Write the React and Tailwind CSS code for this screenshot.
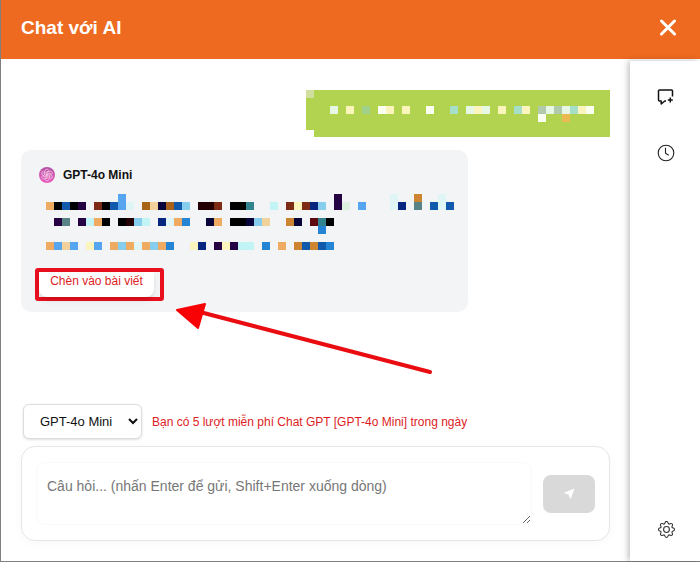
import { useState } from "react";

const CELL = 8;

const PALETTE = {
  K: "#000000",
  o: "#efab61",
  O: "#cd8532",
  b: "#1059ab",
  B: "#2684d6",
  s: "#58a5ef",
  S: "#86cdee",
  n: "#06267f",
  N: "#07053c",
  v: "#250344",
  r: "#7d2b14",
  R: "#230004",
  M: "#5e0a10",
  w: "#a8621a",
  c: "#f2d29b",
  y: "#fbf4bc",
  p: "#e0f6f6",
  P: "#c2f3f5",
  g: "#5a8385",
  G: "#33838f",
  e: "#def3df",
  L: "#d0dfa0",
  W: "#fafff0",
  m: "#e6f8e4",
  t: "#a6dfc7",
  T: "#b1cbaa",
  d: "#9fcf88",
  f: "#ebbb52",
};

const userMask = [
  "L                                     ",
  "                                      ",
  "   m y d Wy y  W  t mym y ty TmTmtyW  ",
  "                             W  f     ",
];

const answerMask = [
  ".........s..........................v......p..O..p.",
  "oKbKv.rKbsp.wcNwbS.RRr.KKG..P.ryrnS.ve.s...pn.g.bpb",
  "...................................................",
  ".vg.vPoK.KRSP.npoB..No.KKNSc..ON.MGK...............",
  "..................................B................",
  "...................................................",
  "oscs.ys.oSopoSoB..yn.vyvPP.B.o.ObObB...............",
];

const MaskedText = ({ rows, label }) => {
  const width = rows[0].length * CELL;
  const height = rows.length * CELL;

  return (
    <svg
      role="img"
      aria-label={label}
      width={width}
      height={height}
      viewBox={`0 0 ${width} ${height}`}
      shapeRendering="crispEdges"
      className="block"
    >
      {rows.map((row, y) =>
        [...row].map((key, x) =>
          PALETTE[key] ? (
            <rect
              key={`${x}-${y}`}
              x={x * CELL}
              y={y * CELL}
              width={CELL}
              height={CELL}
              fill={PALETTE[key]}
            />
          ) : null
        )
      )}
    </svg>
  );
};

const BotLogo = () => (
  <svg width="16" height="16" viewBox="0 0 16 16" fill="none" aria-hidden="true">
    <defs>
      <linearGradient id="bot" x1="0" y1="0" x2="0" y2="1">
        <stop offset="0" stopColor="#b0529f" />
        <stop offset="1" stopColor="#ee5fc0" />
      </linearGradient>
    </defs>
    <circle cx="8" cy="8" r="8" fill="url(#bot)" />
    <g stroke="#f6c9ea" strokeWidth="0.8">
      {[0, 60, 120, 180, 240, 300].map((a) => (
        <path key={a} transform={`rotate(${a} 8 8)`} d="M5.8 6.8V4.4A2.2 2.2 0 0 1 9.5 2.9M7.2 8.5V5.2L9.8 3.8" />
      ))}
    </g>
  </svg>
);

const CloseIcon = () => (
  <svg width="18" height="18" viewBox="0 0 18 18" stroke="#fff" strokeWidth="3" strokeLinecap="round" aria-hidden="true">
    <path d="M2.500 2l13 13M15.500 2l-13 13" />
  </svg>
);

const NewChatIcon = () => (
  <svg width="18" height="18" viewBox="0 0 18 18" fill="none" stroke="#111" strokeWidth="1.5" strokeLinejoin="round" aria-hidden="true">
    <path d="M15.500 8.500V3a1 1 0 0 0-1-1h-12a1 1 0 0 0-1 1v9a1 1 0 0 0 1 1h1.700v3l3.600-3h1.200" />
    <path d="M13.300 9.500v5M10.800 12h5" />
  </svg>
);

const HistoryIcon = () => (
  <svg width="18" height="18" viewBox="0 0 18 18" fill="none" stroke="#222" strokeWidth="1.1" aria-hidden="true">
    <circle cx="9" cy="9" r="7.8" />
    <path d="M8.500 3.800v5.500l3.200 1.900" />
  </svg>
);

const GearIcon = () => (
  <svg width="17" height="17" viewBox="0 0 16 16" fill="#333" aria-hidden="true">
    <path d="M8 4.754a3.246 3.246 0 1 0 0 6.492 3.246 3.246 0 0 0 0-6.492M5.754 8a2.246 2.246 0 1 1 4.492 0 2.246 2.246 0 0 1-4.492 0" />
    <path d="M9.796 1.343c-.527-1.79-3.065-1.79-3.592 0l-.094.319a.873.873 0 0 1-1.255.52l-.292-.16c-1.64-.892-3.433.902-2.54 2.541l.159.292a.873.873 0 0 1-.52 1.255l-.319.094c-1.79.527-1.79 3.065 0 3.592l.319.094a.873.873 0 0 1 .52 1.255l-.16.292c-.892 1.64.901 3.434 2.541 2.54l.292-.159a.873.873 0 0 1 1.255.52l.094.319c.527 1.79 3.065 1.79 3.592 0l.094-.319a.873.873 0 0 1 1.255-.52l.292.16c1.64.893 3.434-.902 2.54-2.541l-.159-.292a.873.873 0 0 1 .52-1.255l.319-.094c1.79-.527 1.79-3.065 0-3.592l-.319-.094a.873.873 0 0 1-.52-1.255l.16-.292c.893-1.64-.902-3.433-2.541-2.54l-.292.159a.873.873 0 0 1-1.255-.52zm-2.633.283c.246-.835 1.428-.835 1.674 0l.094.319a1.873 1.873 0 0 0 2.693 1.115l.291-.16c.764-.415 1.6.42 1.184 1.185l-.159.292a1.873 1.873 0 0 0 1.116 2.692l.318.094c.835.246.835 1.428 0 1.674l-.319.094a1.873 1.873 0 0 0-1.115 2.693l.16.291c.415.764-.42 1.6-1.185 1.184l-.291-.159a1.873 1.873 0 0 0-2.693 1.116l-.094.318c-.246.835-1.428.835-1.674 0l-.094-.319a1.873 1.873 0 0 0-2.692-1.115l-.292.16c-.764.415-1.6-.42-1.184-1.185l.159-.291A1.873 1.873 0 0 0 1.945 8.93l-.319-.094c-.835-.246-.835-1.428 0-1.674l.319-.094A1.873 1.873 0 0 0 3.06 4.377l-.16-.292c-.415-.764.42-1.6 1.185-1.184l.292.159a1.873 1.873 0 0 0 2.692-1.115z" />
  </svg>
);

const SendIcon = () => (
  <svg width="12" height="12" viewBox="0 0 12 12" fill="#fff" aria-hidden="true">
    <path d="M11.500 .500L.500 5l5 1.500L7.500 11.500z" />
  </svg>
);

const Arrow = () => (
  <svg width="258" height="72" viewBox="0 0 258 72" className="pointer-events-none absolute left-[155px] top-[152px]" aria-hidden="true">
    <path d="M22 9.500L254 70" stroke="#e90d12" strokeWidth="4" strokeLinecap="round" />
    <path d="M1 8L29 2l-7 24z" fill="#f80205" stroke="#f80205" strokeWidth="2" strokeLinejoin="round" />
  </svg>
);

const UserMessage = () => (
  <div className="flex justify-end">
    <div className="h-[47px] bg-[#b2d34f] [clip-path:polygon(0_0,100%_0,100%_100%,8px_100%,8px_40px,0_40px)]">
      <MaskedText rows={userMask} label="Tin nhắn của bạn" />
    </div>
  </div>
);

const BotMessage = () => (
  <div className="relative mt-[13px] w-[447px] max-w-full rounded-[10px] bg-[#f3f4f6] pt-4 pb-[11px]">
    <div className="flex items-center gap-2 pl-[18px]">
      <BotLogo />
      <span className="text-[12px] leading-[18px] font-bold text-[#111]">GPT-4o Mini</span>
    </div>
    <div className="mt-[10px] overflow-hidden pl-[25px]">
      <MaskedText rows={answerMask} label="Câu trả lời" />
    </div>
    <div className="mt-[18px] ml-[14px] w-[129px] rounded-[3px] border-4 border-[#e8101f]">
      <button className="block h-[25px] w-[115px] rounded-b-lg bg-white pb-2 text-[12px] leading-4 text-[#dc1c24] shadow-md">
        Chèn vào bài viết
      </button>
    </div>
    <Arrow />
  </div>
);

const ChatForm = () => {
  const [model, setModel] = useState("GPT-4o Mini");
  const [question, setQuestion] = useState("");

  return (
    <form className="mt-auto" onSubmit={(e) => e.preventDefault()}>
      <div className="flex items-center gap-[10px] pl-[2px]">
        <select
          aria-label="Model"
          value={model}
          onChange={(e) => setModel(e.target.value)}
          className="h-[35px] w-[119px] rounded-md border border-[#ddd] bg-white pl-3 text-[13px] text-[#111] shadow-sm"
        >
          <option>GPT-4o Mini</option>
        </select>
        <p className="text-[12px] text-[#dc1c24]">
          Bạn có 5 lượt miễn phí Chat GPT [GPT-4o Mini] trong ngày
        </p>
      </div>
      <div className="mt-[7px] flex items-center gap-[11px] rounded-[14px] border border-[#e6e6e6] bg-white px-[14px] py-[15px] shadow-[0_2px_8px_rgba(0,0,0,0.03)]">
        <textarea
          aria-label="Câu hỏi"
          value={question}
          onChange={(e) => setQuestion(e.target.value)}
          placeholder="Câu hỏi... (nhấn Enter để gửi, Shift+Enter xuống dòng)"
          className="block h-[63px] min-w-0 flex-1 rounded-lg border border-[#fafafa] bg-white px-[10px] py-[13px] text-[14px] leading-5 placeholder:text-[#777]"
        />
        <button
          type="submit"
          aria-label="Gửi"
          className="flex h-[38px] w-[52px] items-center justify-center rounded-lg bg-[#d9d9d9]"
        >
          <SendIcon />
        </button>
      </div>
    </form>
  );
};

const App = () => {
  return (
    <div className="flex min-h-screen flex-col border-b border-l border-[#808080] bg-white font-['Liberation_Sans',Arial,sans-serif]">
      <header className="flex h-[59px] items-center justify-between bg-[#ed6a20] pr-[23px] pb-[3px] pl-5">
        <h1 className="text-[19px] leading-6 font-bold text-white">Chat với AI</h1>
        <button aria-label="Đóng">
          <CloseIcon />
        </button>
      </header>
      <div className="flex flex-1">
        <main className="flex min-w-0 flex-1 flex-col px-5 pt-[31px] pb-5">
          <UserMessage />
          <BotMessage />
          <ChatForm />
        </main>
        <aside className="mt-[2px] flex w-[70px] flex-col items-center bg-white pt-[27px] pb-[23px] pl-[2px] shadow-[-2px_0_6px_rgba(0,0,0,0.25)]">
          <button aria-label="Cuộc trò chuyện mới">
            <NewChatIcon />
          </button>
          <button aria-label="Lịch sử" className="mt-[38px]">
            <HistoryIcon />
          </button>
          <button aria-label="Cài đặt" className="mt-auto">
            <GearIcon />
          </button>
        </aside>
      </div>
    </div>
  );
};

export default App;
